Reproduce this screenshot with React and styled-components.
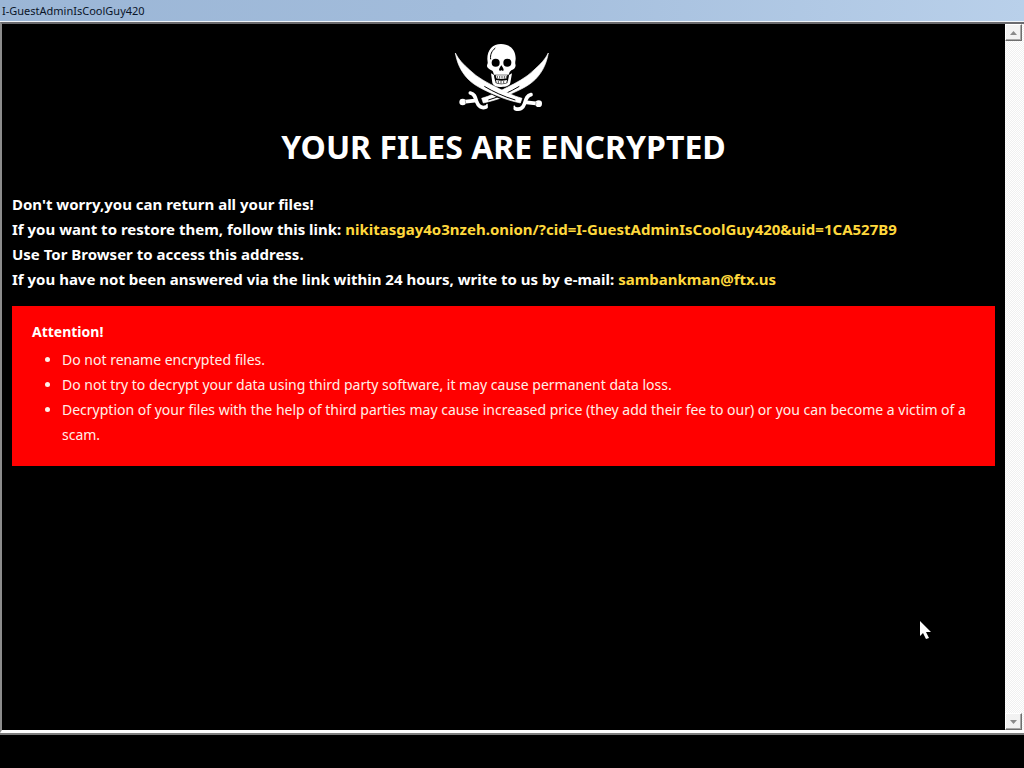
import React from "react";
import styled, { createGlobalStyle } from "styled-components";

const GlobalStyle = createGlobalStyle`
  * { box-sizing: border-box; }
  body {
    margin: 0;
    background: #000;
    color: #fff;
    font-family: "Noto Sans", Tahoma, sans-serif;
  }
`;

const Desktop = styled.div`
  position: relative;
  display: flex;
  flex-direction: column;
  min-height: 100vh;
  padding-bottom: 35px;
  background: #000;
`;

const TitleBar = styled.header`
  display: flex;
  align-items: center;
  height: 22px;
  padding: 0 2px;
  background: linear-gradient(90deg, #9bb6d6 0%, #a2bcdb 45%, #b9d0ea 100%);
  border-bottom: 1px solid #f0f4f8;
  color: #0a1428;
  font-size: 11px;
  line-height: 16px;
`;

const Frame = styled.div`
  flex: 1;
  display: flex;
  border-top: 2px solid #6a6a6e;
  border-left: 2px solid #8c8c8c;
  border-bottom: 3px solid #fff;
  box-shadow: 0 2px 0 #7d7d7d;
`;

const Content = styled.main`
  flex: 1;
  padding: 11px 10px;
  font-size: 15px;
  line-height: 25px;
`;

const Emblem = styled.svg`
  display: block;
  width: 117px;
  height: 85px;
  margin: 0 auto;
`;

const Heading = styled.h1`
  margin: 7px 0 25px;
  font-size: 32px;
  line-height: 40px;
  font-weight: 700;
  text-align: center;
`;

const Message = styled.p`
  margin: 0 0 14px;
  font-weight: 700;
`;

const Line = styled.span`
  display: block;
`;

const Link = styled.a`
  color: #ffd83c;
  text-decoration: none;
`;

const Notice = styled.section`
  padding: 13px 20px 19px;
  background: #ff0000;
  font-size: 14px;
`;

const NoticeTitle = styled.h2`
  margin: 0 0 3px;
  font-size: 14px;
  line-height: 25px;
  font-weight: 700;
`;

const NoticeList = styled.ul`
  margin: 0;
  padding: 0 0 0 30px;
  color: #fff0e8;
`;

const ScrollTrack = styled.div`
  display: flex;
  flex-direction: column;
  justify-content: space-between;
  width: 19px;
  padding-right: 2px;
  background: repeating-conic-gradient(#fff 0 25%, #f0f0f0 0 50%) 0 0 / 2px 2px;
`;

const ScrollButton = styled.button`
  display: flex;
  align-items: center;
  justify-content: center;
  width: 17px;
  height: 17px;
  padding: 0;
  background: #f2f2f2;
  border: 1px solid;
  border-color: #fff #6e6e6e #6e6e6e #fff;
  box-shadow: inset -1px -1px 0 #a8a8a8;
`;

const Pointer = styled.svg`
  position: absolute;
  left: 920px;
  top: 621px;
  width: 12px;
  height: 19px;
`;

function Arrow({ down }) {
  return (
    <svg width="7" height="4" viewBox="0 0 7 4" aria-hidden="true">
      <path d={down ? "M0 0h7L3.5 4z" : "M0 4h7L3.5 0z"} fill="#8a8a8a" />
    </svg>
  );
}

function Blade() {
  return (
    <g>
      <path
        d="M31 54C36 82 46 108 69 132C92 156 131 171 161 184C184 194 205 199 226 204L231 190C206 183 181 171 160 160C127 143 98 129 74 105C54 87 41 74 31 54Z"
        fill="#fff"
        stroke="#fff"
        strokeWidth="2"
      />
      <path d="M118 154C145 170 176 185 211 195" fill="none" stroke="#000" strokeWidth="3" />
    </g>
  );
}

function Hilt() {
  return (
    <g fill="none" stroke="#fff" strokeLinecap="round">
      <path d="M258 179C244 182 243 193 239 205C234 219 225 226 211 221" stroke="#000" strokeWidth="15" />
      <path d="M258 179C244 182 243 193 239 205C234 219 225 226 211 221" strokeWidth="11" />
      <path d="M209 221L208 214" strokeWidth="5" />
      <path d="M245 202L272 205" strokeWidth="11" />
      <circle cx="281" cy="206" r="10" fill="#fff" stroke="none" />
      <path d="M273 202L272 210" stroke="#000" strokeWidth="1" />
    </g>
  );
}

function SkullAndSabers() {
  return (
    <Emblem viewBox="0 0 351 255" role="img" aria-label="Skull and crossed sabers">
      <g transform="matrix(-1 0 0 1 341 0)">
        <Blade />
      </g>
      <path d="M134 162C155 174 180 185 202 193" fill="none" stroke="#000" strokeWidth="24" />
      <Blade />
      <Hilt />
      <g transform="matrix(-1 0 0 1 334 -5)">
        <Hilt />
      </g>
      <path
        d="M127 72C127 44 143 27 168 27C195 27 212 44 212 70C212 77 210 82 211 87C214 96 208 103 199 106L194 111L191 119L147 119L144 110C142 105 131 104 127 96C124 90 129 86 128 82Z"
        fill="#fff"
      />
      <path d="M138 115L147 120L150 137L189 137L192 120L201 115L196 143C194 151 186 156 169 156C153 156 144 151 142 143Z" fill="#fff" />
      <path d="M148 122H190L187 144C175 149 163 149 152 144Z" fill="#000" />
      <path d="M152 121H187L185 130C176 133 163 133 154 130Z" fill="#fff" />
      <path d="M153 135C164 138 175 138 186 135L184 144C175 147 164 147 155 144Z" fill="#fff" />
      <path d="M157 123V129M164 123V131M171 123V131M178 123V131M184 123V129M160 138V145M168 138V146M176 138V145" stroke="#000" strokeWidth="2" />
      <ellipse cx="152" cy="83" rx="12" ry="12" fill="#000" />
      <ellipse cx="187" cy="83" rx="12" ry="12" fill="#000" />
      <path d="M169 91C164 98 160 105 164 107C167 109 168 105 169 105C170 105 171 109 175 107C178 105 174 98 169 91Z" fill="#000" />
      <path d="M151 39C140 48 135 59 137 73" fill="none" stroke="#000" strokeWidth="3" />
    </Emblem>
  );
}

export default function App() {
  return (
    <Desktop>
      <GlobalStyle />
      <TitleBar>I-GuestAdminIsCoolGuy420</TitleBar>
      <Frame>
        <Content>
          <SkullAndSabers />
          <Heading>YOUR FILES ARE ENCRYPTED</Heading>
          <Message>
            <Line>Don't worry,you can return all your files!</Line>
            <Line>
              If you want to restore them, follow this link:{" "}
              <Link href="#link">nikitasgay4o3nzeh.onion/?cid=I-GuestAdminIsCoolGuy420&amp;uid=1CA527B9</Link>
            </Line>
            <Line>Use Tor Browser to access this address.</Line>
            <Line>
              If you have not been answered via the link within 24 hours, write to us by e-mail:{" "}
              <Link href="#mail">sambankman@ftx.us</Link>
            </Line>
          </Message>
          <Notice>
            <NoticeTitle>Attention!</NoticeTitle>
            <NoticeList>
              <li>Do not rename encrypted files.</li>
              <li>Do not try to decrypt your data using third party software, it may cause permanent data loss.</li>
              <li>
                Decryption of your files with the help of third parties may cause increased price (they add their fee
                to our) or you can become a victim of a scam.
              </li>
            </NoticeList>
          </Notice>
        </Content>
        <ScrollTrack>
          <ScrollButton type="button" aria-label="Scroll up">
            <Arrow />
          </ScrollButton>
          <ScrollButton type="button" aria-label="Scroll down">
            <Arrow down />
          </ScrollButton>
        </ScrollTrack>
      </Frame>
      <Pointer viewBox="0 0 12 19" aria-hidden="true">
        <path d="M0 0V15L3 12L6 18L9 17L6 11H11Z" fill="#fff" />
      </Pointer>
    </Desktop>
  );
}
